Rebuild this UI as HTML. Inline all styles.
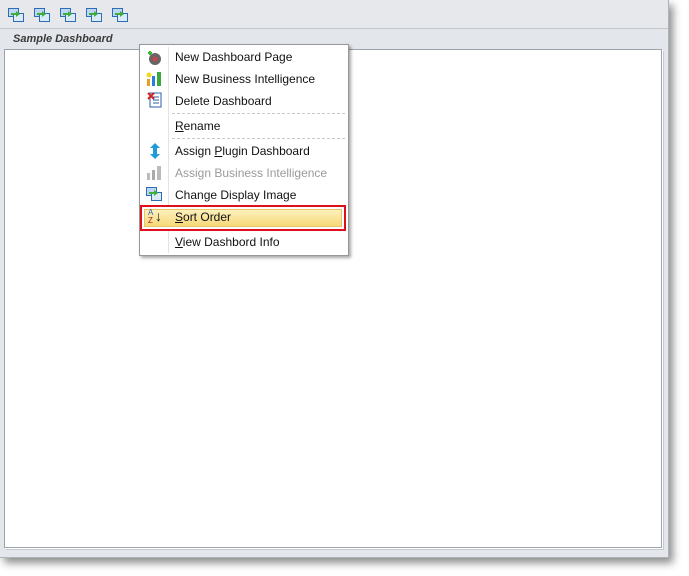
<html><head><style>
body{margin:0;width:689px;height:576px;background:#fff;position:relative;font-family:"Liberation Sans",sans-serif;overflow:hidden}
.outer{position:absolute;left:0;top:0;width:668px;height:557px;background:#e3e6eb;border-right:1px solid #aeb3ba;border-bottom:1px solid #aeb3ba;box-shadow:4px 5px 8px rgba(0,0,0,.45)}
.tb{position:absolute;left:0;top:0;width:668px;height:28px;background:#e6e8ec;border-bottom:1px solid #c4c8ce}
.ic{position:absolute;top:8px;width:16px;height:14px}
.tab{position:absolute;left:13px;top:33px;font-size:11px;font-style:italic;font-weight:bold;color:#3a3a3a}
.inner{position:absolute;left:4px;top:49px;width:656px;height:497px;background:#fff;border:1px solid #9da3aa;box-shadow:1px 1px 0 #fff, 2px 2px 0 #c6cbd2}
.menu{position:absolute;left:139px;top:44px;width:208px;height:210px;background:#fff;border:1px solid #979797;box-shadow:2px 2px 3px rgba(0,0,0,.35)}
.col{position:absolute;left:28px;top:2px;bottom:2px;border-left:1px solid #e2e3e3}
.it{position:absolute;left:35px;font-size:12px;color:#111}
.dis{color:#9a9a9a}
.sep{position:absolute;left:32px;right:3px;border-top:1px dashed #c8c8c8}
.hl{position:absolute;left:0;top:160px;width:206px;height:26px;border:2px solid #e0101a;box-sizing:border-box;background:#fff}
.hl div{position:absolute;left:2px;top:2px;right:2px;bottom:2px;background:linear-gradient(#fdf0bd,#f7d979);border:1px solid #e6c467}
u{text-decoration:underline}
</style></head><body>
<div class="outer">
<div class="tb">
<svg class="ic" style="left:8px" viewBox="0 0 16 14"><rect x="0.5" y="0.5" width="10" height="8" fill="#bcd6f3" stroke="#2d6db5"/><rect x="5.5" y="5.5" width="10" height="8" fill="#dbeaf9" stroke="#2d6db5"/><path d="M3 5h5V3l4 3-4 3V7H3z" fill="#3fae3a"/></svg>
<svg class="ic" style="left:34px" viewBox="0 0 16 14"><rect x="0.5" y="0.5" width="10" height="8" fill="#bcd6f3" stroke="#2d6db5"/><rect x="5.5" y="5.5" width="10" height="8" fill="#dbeaf9" stroke="#2d6db5"/><path d="M3 5h5V3l4 3-4 3V7H3z" fill="#3fae3a"/></svg>
<svg class="ic" style="left:60px" viewBox="0 0 16 14"><rect x="0.5" y="0.5" width="10" height="8" fill="#bcd6f3" stroke="#2d6db5"/><rect x="5.5" y="5.5" width="10" height="8" fill="#dbeaf9" stroke="#2d6db5"/><path d="M3 5h5V3l4 3-4 3V7H3z" fill="#3fae3a"/></svg>
<svg class="ic" style="left:86px" viewBox="0 0 16 14"><rect x="0.5" y="0.5" width="10" height="8" fill="#bcd6f3" stroke="#2d6db5"/><rect x="5.5" y="5.5" width="10" height="8" fill="#dbeaf9" stroke="#2d6db5"/><path d="M3 5h5V3l4 3-4 3V7H3z" fill="#3fae3a"/></svg>
<svg class="ic" style="left:112px" viewBox="0 0 16 14"><rect x="0.5" y="0.5" width="10" height="8" fill="#bcd6f3" stroke="#2d6db5"/><rect x="5.5" y="5.5" width="10" height="8" fill="#dbeaf9" stroke="#2d6db5"/><path d="M3 5h5V3l4 3-4 3V7H3z" fill="#3fae3a"/></svg>
</div>
<div class="tab">Sample Dashboard</div>
<div class="inner"></div>
</div>
<div class="menu">
<div class="col"></div>
<svg style="position:absolute;left:7px;top:5px" width="16" height="16"><circle cx="8" cy="9" r="6" fill="#666"/><circle cx="8" cy="9" r="2.5" fill="#c44"/><path d="M3 1v4M1 3h4" stroke="#3b3" stroke-width="2"/></svg>
<div class="it" style="top:5px">New Dashboard Page</div>
<svg style="position:absolute;left:6px;top:26px" width="16" height="16"><rect x="1" y="8" width="3" height="7" fill="#e8a020"/><rect x="6" y="5" width="3" height="10" fill="#2a7de0"/><rect x="11" y="1" width="4" height="14" fill="#3aa83a"/><circle cx="3" cy="4" r="2.5" fill="#f6d820"/></svg>
<div class="it" style="top:27px">New Business Intelligence</div>
<svg style="position:absolute;left:7px;top:47px" width="16" height="16"><rect x="3" y="1" width="11" height="14" fill="#fff" stroke="#2a5ea8"/><path d="M6 5h6M6 8h6M6 11h6" stroke="#2a5ea8"/><path d="M1 1l6 6M7 1l-6 6" stroke="#d02020" stroke-width="2"/></svg>
<div class="it" style="top:49px">Delete Dashboard</div>
<div class="sep" style="top:68px"></div>
<div class="it" style="top:74px"><u>R</u>ename</div>
<div class="sep" style="top:93px"></div>
<svg style="position:absolute;left:8px;top:98px" width="14" height="16"><path d="M7 0l5 5h-3v6h3l-5 5-5-5h3V5H2z" fill="#1e9bd8"/></svg>
<div class="it" style="top:99px">Assign <u>P</u>lugin Dashboard</div>
<svg style="position:absolute;left:6px;top:120px" width="16" height="16"><rect x="1" y="8" width="3" height="7" fill="#bbb"/><rect x="6" y="5" width="3" height="10" fill="#aaa"/><rect x="11" y="1" width="4" height="14" fill="#bbb"/></svg>
<div class="it dis" style="top:121px">Assign Business Intelligence</div>
<svg style="position:absolute;left:6px;top:142px" width="16" height="14"><rect x="0.5" y="0.5" width="10" height="8" fill="#bcd6f3" stroke="#2d6db5"/><rect x="5.5" y="5.5" width="10" height="8" fill="#dbeaf9" stroke="#2d6db5"/><path d="M3 5h5V3l4 3-4 3V7H3z" fill="#3fae3a"/></svg>
<div class="it" style="top:143px">Change Display Image</div>
<div class="hl"><div></div></div>
<div style="position:absolute;left:8px;top:164px;font-size:8px;line-height:8px;color:#2a5ea8">A<br><span style="color:#a02020">Z</span></div>
<div style="position:absolute;left:15px;top:163px;font-size:14px;color:#111">↓</div>
<div class="it" style="top:165px"><u>S</u>ort Order</div>
<div class="it" style="top:190px"><u>V</u>iew Dashbord Info</div>
</div>
</body></html>
